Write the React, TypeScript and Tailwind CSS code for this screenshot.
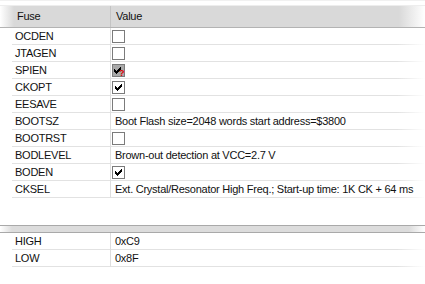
type Cell = { kind: 'text'; text: string } | { kind: 'box'; state: 'off' | 'on' | 'mixed' };

const fuses: { name: string; value: Cell }[] = [
  { name: 'OCDEN', value: { kind: 'box', state: 'off' } },
  { name: 'JTAGEN', value: { kind: 'box', state: 'off' } },
  { name: 'SPIEN', value: { kind: 'box', state: 'mixed' } },
  { name: 'CKOPT', value: { kind: 'box', state: 'on' } },
  { name: 'EESAVE', value: { kind: 'box', state: 'off' } },
  { name: 'BOOTSZ', value: { kind: 'text', text: 'Boot Flash size=2048 words start address=$3800' } },
  { name: 'BOOTRST', value: { kind: 'box', state: 'off' } },
  { name: 'BODLEVEL', value: { kind: 'text', text: 'Brown-out detection at VCC=2.7 V' } },
  { name: 'BODEN', value: { kind: 'box', state: 'on' } },
  { name: 'CKSEL', value: { kind: 'text', text: 'Ext. Crystal/Resonator High Freq.; Start-up time: 1K CK + 64 ms' } },
];

const bytes = [
  { name: 'HIGH', value: '0xC9' },
  { name: 'LOW', value: '0x8F' },
];

// row line fades out towards the right edge
const rowLine =
  'bg-[linear-gradient(to_right,#e2e2e2_calc(100%-28px),rgba(255,255,255,0))] bg-no-repeat bg-bottom bg-[length:100%_1px]';

function Check() {
  return (
    <svg width="7" height="7" viewBox="0 0 7 7" shapeRendering="crispEdges">
      <path d="M6 0h1v3h-1v1h-1v1h-1v1h-1v1h-1v-1h-1v-1h-1v-3h1v1h1v1h1v-1h1v-1h1z" fill="#000" />
    </svg>
  );
}

function CheckBox({ state }: { state: 'off' | 'on' | 'mixed' }) {
  return (
    <div
      className={`relative w-[13px] h-[13px] border border-[#7b7b7b] flex items-center ${
        state === 'mixed' ? 'bg-[#a9a9a9] justify-start pl-px pb-px' : 'bg-white justify-center'
      }`}
    >
      {state !== 'off' && <Check />}
      {state === 'mixed' && (
        <span className="absolute left-[6px] top-[4px] text-[9px] leading-none font-bold text-[#e00000]">?</span>
      )}
    </div>
  );
}

function Row({ name, children }: { name: string; children: React.ReactNode }) {
  return (
    <div className={`flex h-[17px] ${rowLine}`}>
      <div className="w-[99px] shrink-0 border-r border-[#dedede] pl-[3px] flex items-center pb-px">{name}</div>
      <div className="flex-1 flex items-center pb-px whitespace-nowrap">{children}</div>
    </div>
  );
}

export default function App() {
  return (
    <div
      className="w-[425px] h-[284px] bg-white overflow-hidden text-[11px] tracking-[-0.25px] text-[#111]"
      style={{ fontFamily: '"Liberation Sans", Arial, sans-serif' }}
    >
      {/* faded window top */}
      <div className="h-[5px] border-t border-[#f1f1f1]" />

      {/* column header */}
      <div className="h-[23px] flex border-t border-[#ededed] border-b border-b-[#b3b3b3] bg-[linear-gradient(to_right,#ffffff,#d9d9d9_14px,#d9d9d9_calc(100%-26px),#ffffff)]">
        <div className="w-[111px] shrink-0 border-r border-[#c4c4c4] pl-[17px] flex items-center">Fuse</div>
        <div className="flex-1 pl-[5px] flex items-center">Value</div>
      </div>

      <div className="ml-[12px]">
        {fuses.map((f) => (
          <Row key={f.name} name={f.name}>
            {f.value.kind === 'box' ? (
              <div className="pl-px pt-px">
                <CheckBox state={f.value.state} />
              </div>
            ) : (
              <span className="pl-[4px]">{f.value.text}</span>
            )}
          </Row>
        ))}
      </div>

      <div className="h-[27px]" />

      {/* separator band */}
      <div className="h-[8px] border-y border-[#a9a9a9] bg-[linear-gradient(to_right,#ffffff,#dcdcdc_12px,#dcdcdc_calc(100%-16px),#ffffff)]" />

      <div className="ml-[12px]">
        {bytes.map((b) => (
          <Row key={b.name} name={b.name}>
            <span className="pl-[4px]">{b.value}</span>
          </Row>
        ))}
      </div>
    </div>
  );
}
